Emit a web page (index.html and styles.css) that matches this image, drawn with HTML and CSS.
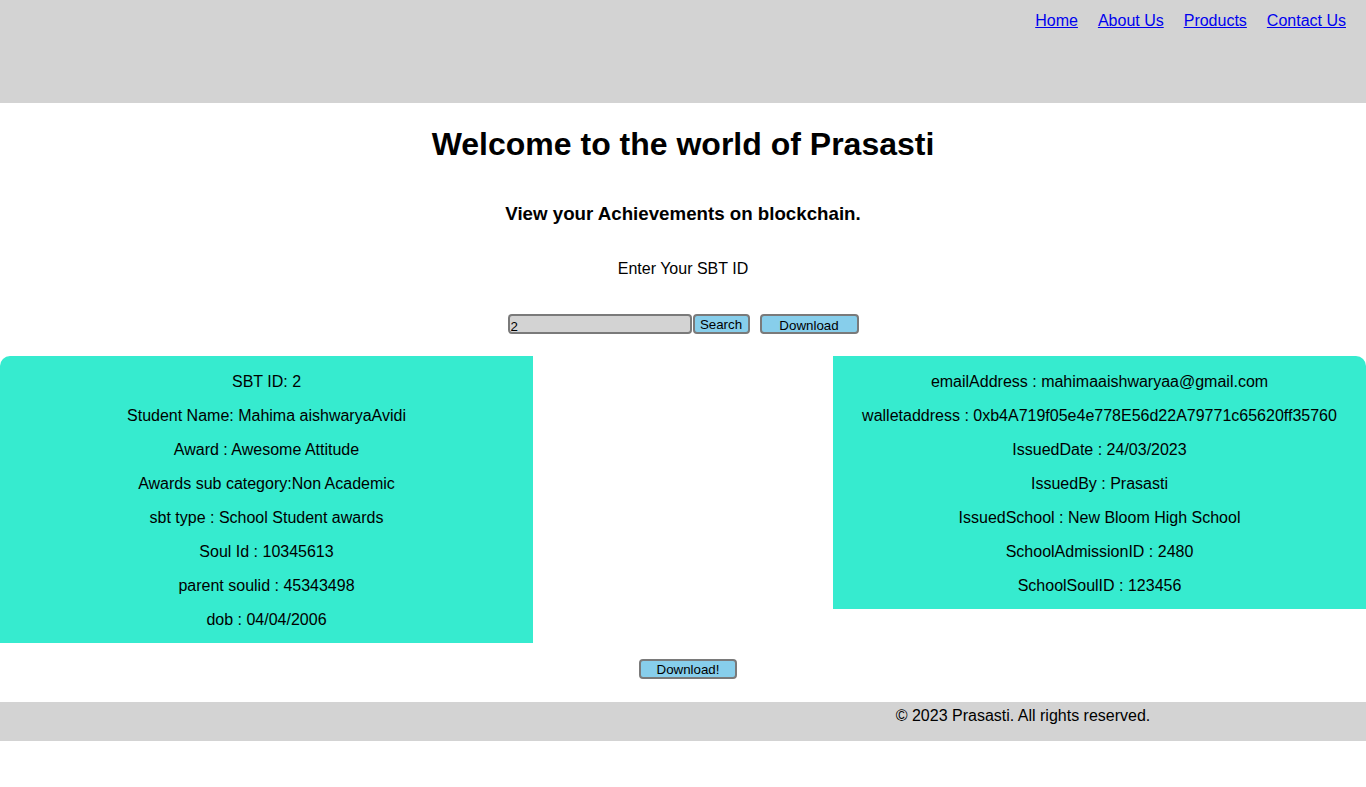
FILE: index.html
```html
<!DOCTYPE html>
<html lang="en">
<head>
<meta charset="utf-8">
<title>Prasasti</title>
<link rel="stylesheet" href="styles.css">
</head>
<body>
<header class="site-header">
  <nav class="nav">
    <a href="#">Home</a>
    <a href="#">About Us</a>
    <a href="#">Products</a>
    <a href="#">Contact Us</a>
  </nav>
</header>
<main class="main">
  <h1 class="title">Welcome to the world of Prasasti</h1>
  <h3 class="subtitle">View your Achievements on blockchain.</h3>
  <p class="prompt">Enter Your SBT ID</p>
  <div class="search-row">
    <input class="sbt-input" type="text" value="2">
    <button class="btn btn-search">Search</button>
    <button class="btn btn-download">Download</button>
  </div>
  <div class="panels">
    <div class="panel panel-left">
      <p>SBT ID: 2</p>
      <p>Student Name: Mahima aishwaryaAvidi</p>
      <p>Award : Awesome Attitude</p>
      <p>Awards sub category:Non Academic</p>
      <p>sbt type : School Student awards</p>
      <p>Soul Id : 10345613</p>
      <p>parent soulid : 45343498</p>
      <p>dob : 04/04/2006</p>
    </div>
    <div class="panel panel-right">
      <p>emailAddress : mahimaaishwaryaa@gmail.com</p>
      <p>walletaddress : 0xb4A719f05e4e778E56d22A79771c65620ff35760</p>
      <p>IssuedDate : 24/03/2023</p>
      <p>IssuedBy : Prasasti</p>
      <p>IssuedSchool : New Bloom High School</p>
      <p>SchoolAdmissionID : 2480</p>
      <p>SchoolSoulID : 123456</p>
    </div>
  </div>
  <div class="bottom-action">
    <button class="btn btn-bottom">Download!</button>
  </div>
</main>
<footer class="site-footer">
  <p class="copy">© 2023 Prasasti. All rights reserved.</p>
</footer>
</body>
</html>
```
FILE: styles.css
```css
* { box-sizing: border-box; }
html, body { background: #ffffff; }
body {
  margin: 0;
  font-family: "Liberation Sans", Arial, sans-serif;
  font-size: 16px;
  color: #000;
}
.site-header {
  background: #d3d3d3;
  height: 103px;
}
.nav {
  display: flex;
  justify-content: flex-end;
  gap: 20px;
  padding: 12px 20px 0 0;
}
.nav a {
  color: #0000ee;
  text-decoration: underline;
  font-size: 16px;
  line-height: 18px;
}
.main {
  text-align: center;
}
.title {
  font-size: 32px;
  font-weight: bold;
  margin: 23px 0 0;
  line-height: 37px;
}
.subtitle {
  font-size: 18.72px;
  font-weight: bold;
  margin: 40px 0 0;
  line-height: 22px;
}
.prompt {
  margin: 35px 0 0;
  line-height: 18px;
}
.search-row {
  display: flex;
  justify-content: center;
  align-items: center;
  margin-top: 36px;
  height: 20px;
}
.sbt-input {
  width: 184px;
  height: 20px;
  background: #d3d3d3;
  border: 2px solid #7a7a7a;
  border-radius: 4px;
  font-family: "Liberation Sans", Arial, sans-serif;
  font-size: 13.33px;
  padding: 5px 1px 0;
  color: #000;
  margin: 0;
}
.btn {
  background: #87ceeb;
  border: 2px solid #7a7a7a;
  border-radius: 4px;
  font-family: "Liberation Sans", Arial, sans-serif;
  font-size: 13.33px;
  color: #000;
  height: 20px;
  padding: 0;
  margin: 0;
  line-height: 14px;
}
.btn-search {
  width: 57px;
  margin-left: 1px;
  padding-top: 2px;
}
.btn-download {
  width: 99px;
  margin-left: 10px;
  padding-top: 3px;
}
.panels {
  display: flex;
  justify-content: space-between;
  align-items: flex-start;
  margin-top: 22px;
}
.panel {
  width: 533px;
  background: #36ebcf;
  padding: 0;
}
.panel p {
  margin: 16px 0;
  padding-top: 2px;
  line-height: 16px;
}
.panel p:last-child { margin-bottom: 15px; }
.panel-left { border-radius: 10px 0 0 0; }
.panel-right { border-radius: 0 10px 0 0; }
.bottom-action {
  padding-left: 10px;
  margin-top: 16px;
  height: 20px;
  display: flex;
  justify-content: center;
}
.btn-bottom {
  width: 98px;
  padding-top: 1px;
}
.site-footer {
  background: #d3d3d3;
  margin-top: 23px;
  height: 39px;
  padding: 5px 0 0 680px;
  text-align: center;
}
.copy {
  margin: 0;
  line-height: 18px;
}
```
